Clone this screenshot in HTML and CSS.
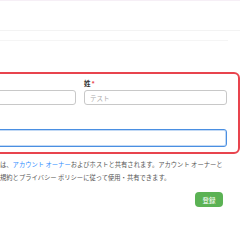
FILE: index.html
```html
<!DOCTYPE html>
<html lang="ja">
<head>
    <meta charset="UTF-8">
    <meta name="viewport" content="width=device-width, initial-scale=1.0">
    <title>登録</title>
    <link rel="stylesheet" href="styles.css">
</head>
<body>
    <div class="topbar"></div>
    <div class="header"></div>

    <div class="content">
        <div class="divider"></div>

        <form class="card">
            <div class="row">
                <div class="field">
                    <div class="label"></div>
                    <input class="input" type="text">
                </div>
                <div class="field">
                    <label class="label">姓<span class="req">*</span></label>
                    <input class="input" type="text" placeholder="テスト">
                </div>
            </div>
            <div class="field wide">
                <div class="label"></div>
                <input class="input focus" type="text">
            </div>
        </form>

        <p class="notice">
            <span class="line">は、<a href="#">アカウント オーナー</a>およびホストと共有されます。アカウント オーナーと</span>
            <span class="line">規約とプライバシー ポリシーに従って使用・共有できます。</span>
        </p>

        <div class="actions">
            <button class="btn" type="button">登録</button>
        </div>
    </div>
</body>
</html>
```

FILE: styles.css
```css
* {
    margin: 0;
    padding: 0;
    box-sizing: border-box;
}

body {
    font-family: "Noto Sans CJK JP", "Noto Sans", sans-serif;
    background: #fff;
    width: 240px;
    height: 240px;
    overflow: hidden;
}

.topbar {
    height: 1px;
    background: #f6eff6;
}

.header {
    height: 30px;
    border-bottom: 1px solid #f3f3f3;
}

.content {
    margin-left: -70px;
    width: 310px;
}

.divider {
    height: 1px;
    margin: 9px 12px 0 70px;
    background: #f5f5f5;
}

.card {
    margin-top: 31px;
    border: 2px solid #e8444e;
    border-radius: 6px;
    padding: 4px 11px 5px 11px;
}

.row {
    display: grid;
    grid-template-columns: 1fr 143px;
    gap: 8px;
}

.field.wide {
    margin-top: 12px;
}

.label {
    display: block;
    height: 10px;
    margin-bottom: 2px;
    font-size: 6.5px;
    line-height: 10px;
    font-weight: bold;
    color: #333;
}

.req {
    color: #e8444e;
    margin-left: 1px;
}

.input {
    display: block;
    width: 100%;
    height: 15px;
    border: 1px solid #c8c8c8;
    border-radius: 3px;
    padding: 0 5px;
    font-family: inherit;
    font-size: 6.5px;
    color: #333;
    background: #fff;
    outline: none;
}

.input::placeholder {
    color: #aaa;
}

.input.focus {
    height: 18px;
    border-color: #4a8fe2;
    box-shadow: inset 0 0 0 1px #c2d9f5;
}

.notice {
    margin-top: 4px;
    margin-left: 70px;
    font-size: 6.3px;
    line-height: 13px;
    color: #555;
}

.notice .line {
    display: block;
    white-space: nowrap;
}

.notice a {
    color: #2d8cff;
    text-decoration: none;
}

.actions {
    display: flex;
    justify-content: flex-end;
    margin-top: 8px;
    padding-right: 17px;
}

.btn {
    width: 28px;
    height: 15px;
    border: none;
    border-radius: 4px;
    background: #5bb254;
    color: #fff;
    font-family: inherit;
    font-size: 6.5px;
    cursor: pointer;
}
```
